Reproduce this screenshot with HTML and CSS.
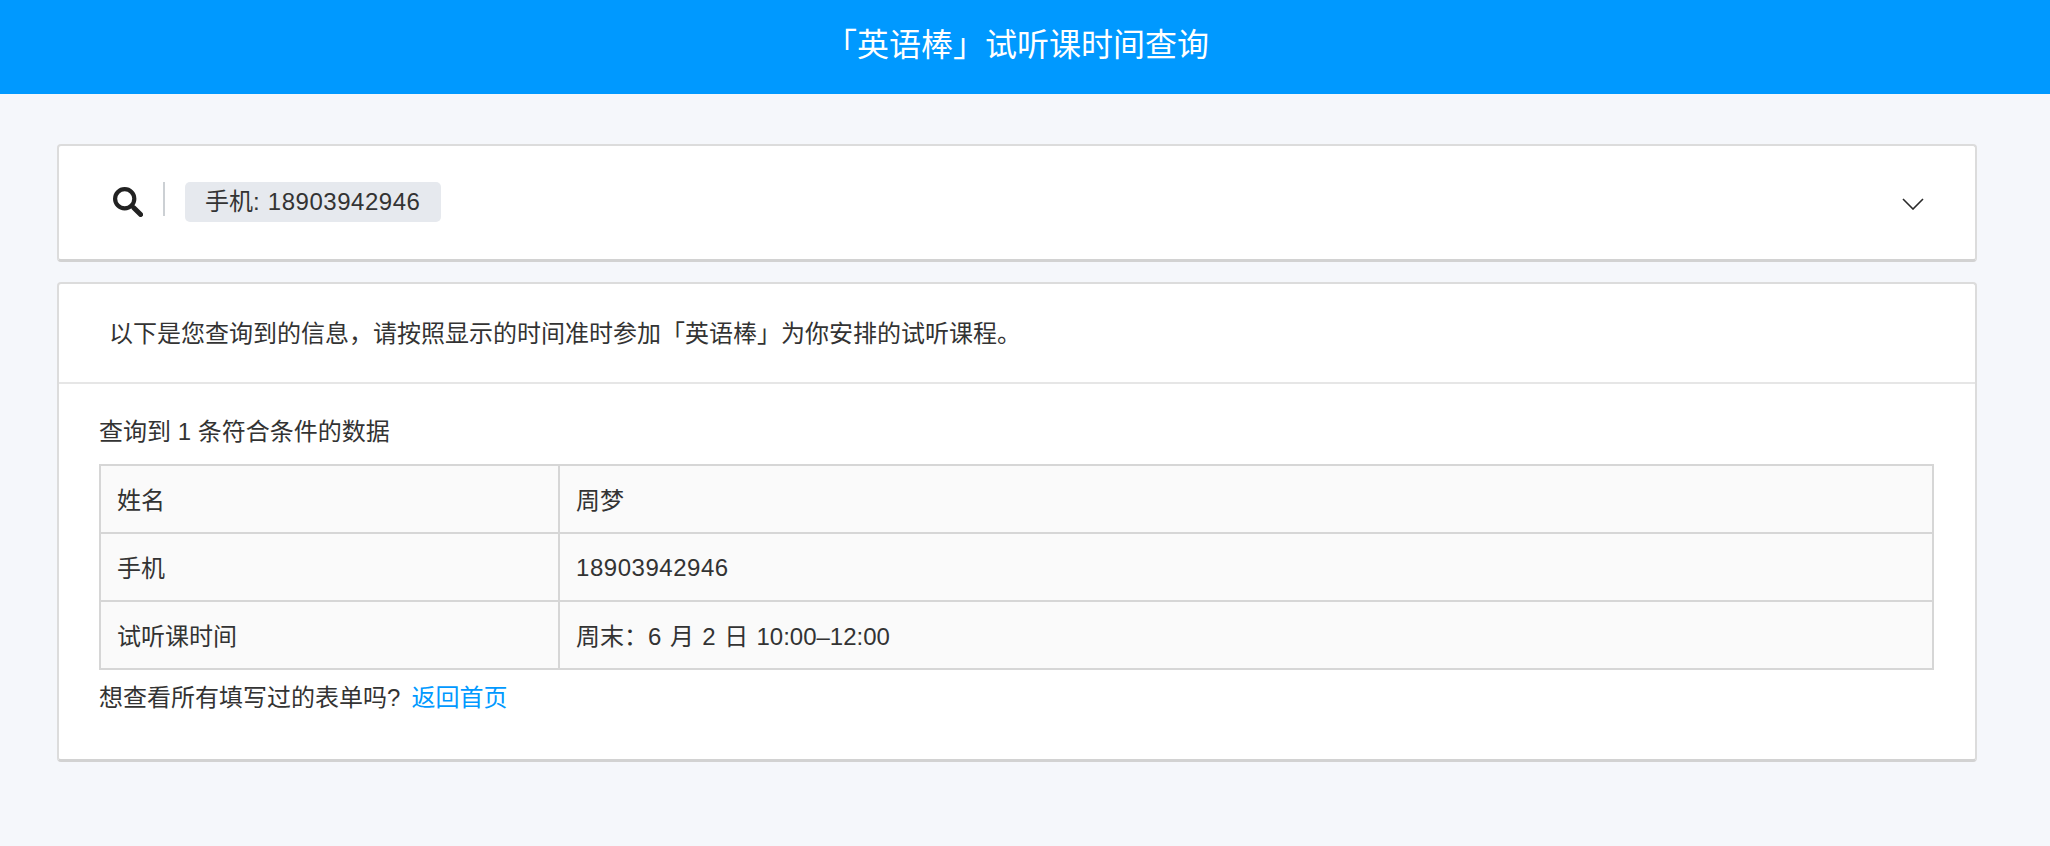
FILE: index.html
```html
<!DOCTYPE html>
<html lang="zh-CN">
<head>
<meta charset="utf-8">
<title>「英语棒」试听课时间查询</title>
<link rel="stylesheet" href="styles.css">
</head>
<body>
<header class="top-bar">「英语棒」试听课时间查询</header>
<main class="content">
  <section class="card search-card">
    <svg class="search-icon" viewBox="0 0 30 30" aria-hidden="true">
      <circle cx="11.7" cy="11.7" r="9.6" fill="none" stroke="#222" stroke-width="4.2"/>
      <path d="M18.5 18.5l2 2" fill="none" stroke="#222" stroke-width="3.4"/>
      <path d="M21 21l6.6 6.6" fill="none" stroke="#222" stroke-width="5" stroke-linecap="round"/>
    </svg>
    <span class="search-sep"></span>
    <span class="tag">手机: <span class="num">18903942946</span></span>
    <svg class="chevron" viewBox="0 0 22 12" aria-hidden="true">
      <path d="M1 1l10 10L21 1" fill="none" stroke="#2a2a2a" stroke-width="1.6"/>
    </svg>
  </section>
  <section class="card result-card">
    <p class="notice">以下是您查询到的信息，请按照显示的时间准时参加「英语棒」为你安排的试听课程。</p>
    <div class="result-body">
      <p class="count">查询到 1 条符合条件的数据</p>
      <table class="data">
        <tr><td class="key">姓名</td><td>周梦</td></tr>
        <tr><td class="key">手机</td><td class="digits"><span class="num">18903942946</span></td></tr>
        <tr><td class="key">试听课时间</td><td>周末：<span class="num">6</span> 月 <span class="num">2</span> 日 10:00–12:00</td></tr>
      </table>
      <p class="foot">想查看所有填写过的表单吗? <a href="#">返回首页</a></p>
    </div>
  </section>
</main>
</body>
</html>
```
FILE: styles.css
```css
* { box-sizing: border-box; }
html, body { margin: 0; height: 100%; }
body {
  background: #f5f7fb;
  color: #333;
  font-family: "Liberation Sans", "Noto Sans CJK SC", sans-serif;
  font-size: 24px;
  word-spacing: 1.5px;
  overflow: hidden;
}
.num { letter-spacing: 0.53px; }
.top-bar {
  height: 94px;
  line-height: 90px;
  padding-right: 16px;
  background: #0099ff;
  color: #fff;
  text-align: center;
  font-size: 32px;
}
.content { padding: 50px 73px 0 57px; }
.card {
  background: #fff;
  border: 2px solid #dcdcdc;
  border-bottom: 3px solid #d2d2d2;
  border-radius: 4px;
}
.search-card {
  height: 118px;
  display: flex;
  align-items: flex-start;
  padding: 36px 51px 0 54px;
  margin-bottom: 20px;
}
.search-icon { width: 30px; height: 30px; margin-top: 5px; flex: none; }
.search-sep { width: 2px; height: 34px; background: #ccd0d4; margin-left: 20px; flex: none; }
.tag {
  margin-left: 20px;
  height: 40px;
  line-height: 40px;
  padding: 0 20px;
  background: #e6e9ee;
  border-radius: 5px;
}
.chevron { width: 22px; height: 12px; margin: 16px 0 0 auto; flex: none; }
.result-card { height: 480px; }
.notice {
  margin: 0;
  height: 100px;
  padding: 0 0 0 50px;
  line-height: 100px;
  border-bottom: 2px solid #e6e6e6;
}
.result-body { padding: 31px 41px 0 40px; }
.count { margin: 0; height: 49px; line-height: 34px; word-spacing: 0; }
.data {
  width: 100%;
  border-collapse: collapse;
  table-layout: fixed;
}
.data td {
  height: 68px;
  padding: 0 16px 2px;
  border: 2px solid #d6d6d6;
  background: #fafafa;
}
.data .key { width: 459px; }
.data .digits { padding: 2px 16px 0; }
.foot { margin: 0; line-height: 56px; }
.foot a { color: #0099ff; text-decoration: none; margin-left: 3px; }
```
